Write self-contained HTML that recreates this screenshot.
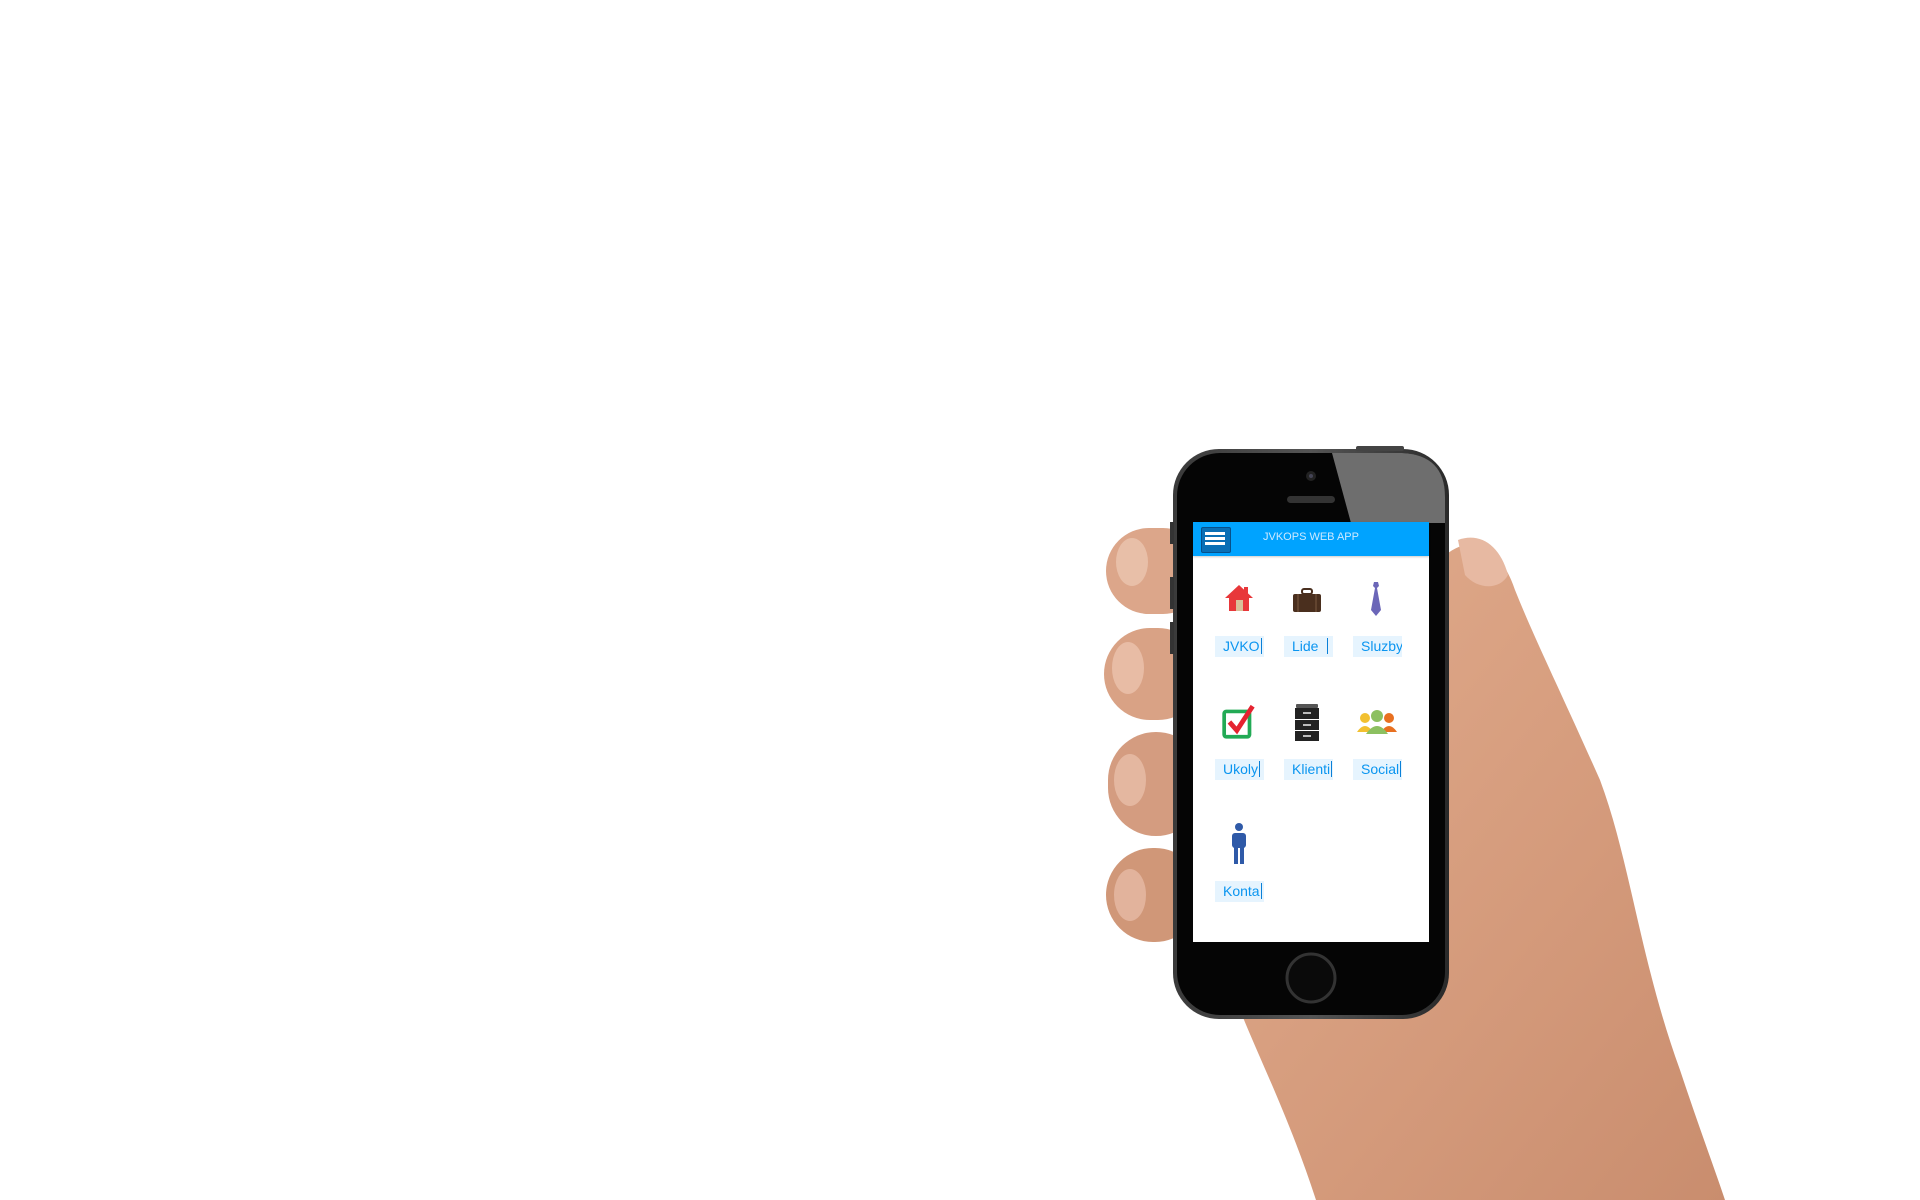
<!DOCTYPE html>
<html><head><meta charset="utf-8"><style>
html,body{margin:0;padding:0;background:#fff;width:1920px;height:1200px;overflow:hidden;position:relative;font-family:"Liberation Sans",Arial,sans-serif}
.a{position:absolute}
.lbl{position:absolute;width:49px;height:21px;background:#e6f4fe;color:#0a95f0;font-size:14px;line-height:21px;white-space:nowrap;overflow:hidden;text-indent:8px}
.lbl span{border-right:1px solid #0a80d8;padding-right:1px}
#ph{position:absolute;left:0;top:0;width:1920px;height:1200px;transform:translate(-6px,-3px)}
</style></head><body>
<svg class="a" style="left:0;top:0" width="1920" height="1200" viewBox="0 0 1920 1200">
<defs>
<linearGradient id="sk" x1="0" y1="0" x2="1" y2="1"><stop offset="0" stop-color="#e2ad8e"/><stop offset="0.6" stop-color="#d49a7b"/><stop offset="1" stop-color="#c98d6e"/></linearGradient>
<linearGradient id="bz" x1="0" y1="0" x2="1" y2="0"><stop offset="0" stop-color="#3a3a3a"/><stop offset="0.5" stop-color="#555"/><stop offset="1" stop-color="#2a2a2a"/></linearGradient>
</defs>
<path d="M1440 560 C1470 530 1500 545 1515 590 C1535 640 1560 690 1600 780 C1630 860 1640 960 1680 1070 C1700 1130 1715 1170 1725 1200 L1316 1200 C1290 1120 1260 1060 1240 1010 L1200 950 L1200 560 Z" fill="url(#sk)"/>
<path d="M1458 540 C1480 532 1500 545 1508 575 C1500 590 1478 590 1465 575 Z" fill="#e7b9a2"/>
<rect x="1106" y="528" width="100" height="86" rx="43" fill="#dca68a"/>
<rect x="1104" y="628" width="100" height="92" rx="46" fill="#d9a285"/>
<rect x="1108" y="732" width="96" height="104" rx="48" fill="#d49c80"/>
<rect x="1106" y="848" width="96" height="94" rx="47" fill="#d09778"/>
<ellipse cx="1132" cy="562" rx="16" ry="24" fill="#e8bfa8"/>
<ellipse cx="1128" cy="668" rx="16" ry="26" fill="#e8bca5"/>
<ellipse cx="1130" cy="780" rx="16" ry="26" fill="#e4b7a0"/>
<ellipse cx="1130" cy="895" rx="16" ry="26" fill="#e2b39c"/>
<g transform="translate(-6,-3)">
<rect x="1179" y="452" width="276" height="570" rx="46" fill="url(#bz)"/>
<rect x="1183" y="456" width="268" height="562" rx="43" fill="#050505"/>
<path d="M1338 456 L1408 456 Q1451 458 1451 500 L1451 526 L1357 526 Z" fill="#6e6e6e"/>
<rect x="1362" y="449" width="48" height="5" rx="2" fill="#444"/>
<circle cx="1317" cy="479" r="5" fill="#222"/><circle cx="1317" cy="479" r="2" fill="#445"/>
<rect x="1293" y="499" width="48" height="7" rx="3.5" fill="#333"/>
<circle cx="1317" cy="981" r="24" fill="#0a0a0a" stroke="#333" stroke-width="3"/>
<rect x="1176" y="525" width="4" height="22" fill="#333"/><rect x="1176" y="580" width="4" height="32" fill="#333"/><rect x="1176" y="625" width="4" height="32" fill="#333"/>
</g>
</svg>
<div id="ph">
<div class="a" style="left:1199px;top:525px;width:236px;height:420px;background:#fff"></div>
<div class="a" style="left:1199px;top:525px;width:236px;height:34px;background:#00a3ff;box-shadow:0 1px 2px rgba(0,0,0,.2)"></div>
<div class="a" style="left:1207px;top:530px;width:28px;height:24px;background:#0a6fb5;border:1px solid #07508a;border-radius:2px"></div>
<div class="a" style="left:1211px;top:535px;width:20px;height:3px;background:#fff;box-shadow:0 5px 0 #fff,0 10px 0 #fff"></div>
<div class="a" style="left:1257px;top:534px;width:120px;text-align:center;color:#cde9ff;font-size:11px">JVKOPS WEB APP</div>
<svg class="a" style="left:1228px;top:584px" width="34" height="34" viewBox="0 0 34 34"><path d="M17 4 L31 17 L27 17 L27 30 L7 30 L7 17 L3 17 Z" fill="#e8373a"/><rect x="22" y="6" width="4" height="8" fill="#e8373a"/><rect x="14" y="19" width="7" height="11" fill="#d9c09a"/></svg>
<svg class="a" style="left:1296px;top:586px" width="34" height="34" viewBox="0 0 34 34"><rect x="12" y="6" width="10" height="5" rx="2" fill="none" stroke="#4a3020" stroke-width="2"/><rect x="3" y="11" width="28" height="18" rx="2" fill="#4a2f1e"/><line x1="8" y1="11" x2="8" y2="29" stroke="#7a5a40"/><line x1="26" y1="11" x2="26" y2="29" stroke="#7a5a40"/></svg>
<svg class="a" style="left:1367px;top:582px" width="30" height="40" viewBox="0 0 30 38"><path d="M13 2 L17 2 L18 6 L16 8 L20 30 L15 36 L10 30 L14 8 L12 6 Z" fill="#6b66b8"/></svg>
<svg class="a" style="left:1227px;top:706px" width="38" height="38" viewBox="0 0 36 36"><rect x="3" y="8" width="24" height="24" rx="2" fill="none" stroke="#22aa55" stroke-width="3.5"/><path d="M8 18 L15 26 L30 3" fill="none" stroke="#e52330" stroke-width="4.5"/></svg>
<svg class="a" style="left:1299px;top:706px" width="28" height="40" viewBox="0 0 28 38"><rect x="3" y="0" width="22" height="4" rx="1" fill="#555"/><rect x="2" y="4" width="24" height="11" fill="#222"/><rect x="2" y="16" width="24" height="10" fill="#222"/><rect x="2" y="27" width="24" height="10" fill="#222"/><rect x="10" y="8" width="8" height="2" fill="#bbb"/><rect x="10" y="20" width="8" height="2" fill="#bbb"/><rect x="10" y="31" width="8" height="2" fill="#bbb"/></svg>
<svg class="a" style="left:1361px;top:711px" width="44" height="30" viewBox="0 0 42 30"><circle cx="9" cy="10" r="5" fill="#f2c030"/><path d="M1 24 Q9 12 17 24 Z" fill="#f2c030"/><circle cx="33" cy="10" r="5" fill="#e87020"/><path d="M25 24 Q33 12 41 24 Z" fill="#e87020"/><circle cx="21" cy="8" r="6" fill="#8cc060"/><path d="M10 26 Q21 10 32 26 Z" fill="#8cc060"/></svg>
<svg class="a" style="left:1234px;top:825px" width="22" height="44" viewBox="0 0 22 44"><circle cx="11" cy="5" r="4" fill="#2f5aa8"/><rect x="4" y="11" width="14" height="15" rx="3" fill="#2f5aa8"/><rect x="6" y="24" width="4" height="18" fill="#2f5aa8"/><rect x="12" y="24" width="4" height="18" fill="#2f5aa8"/></svg>
<div class="lbl" style="left:1221px;top:639px"><span>JVKO</span></div>
<div class="lbl" style="left:1290px;top:639px">Lide <span style="margin-left:8px"></span></div>
<div class="lbl" style="left:1359px;top:639px"><span>Sluzby</span></div>
<div class="lbl" style="left:1221px;top:762px"><span>Ukoly</span></div>
<div class="lbl" style="left:1290px;top:762px"><span>Klienti</span></div>
<div class="lbl" style="left:1359px;top:762px"><span>Social</span></div>
<div class="lbl" style="left:1221px;top:884px"><span>Konta</span></div>
</div>
</body></html>
